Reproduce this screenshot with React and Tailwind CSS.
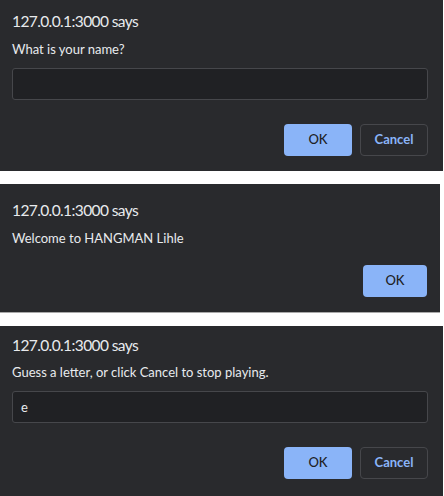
import React from "react";

const font = { fontFamily: 'Lato, "Noto Sans", sans-serif' };

function Title() {
  return (
    <div className="text-[15.5px] leading-[20px] tracking-[-0.6px] text-[#e8eaed]">127.0.0.1:3000 says</div>
  );
}

function Message({ children, className = "" }) {
  return (
    <div className={"text-[13px] leading-[16px] text-[#e8eaed] " + className}>{children}</div>
  );
}

function Input({ value, className = "" }) {
  return (
    <div
      className={
        "h-[32px] w-[416px] rounded-[3px] border border-[#46474b] bg-[#202124] px-[8px] text-[13px] leading-[30px] text-[#e8eaed] " +
        className
      }
    >
      {value}
    </div>
  );
}

function OkButton({ w = "w-[68px]" }) {
  return (
    <button
      className={
        "h-[32px] " +
        w +
        " rounded-[4px] bg-[#8ab4f8] text-[13px] font-medium text-[#202124]"
      }
    >
      OK
    </button>
  );
}

function CancelButton() {
  return (
    <button className="h-[32px] w-[68px] rounded-[4px] border border-[#46474b] bg-transparent text-[13px] font-bold text-[#8ab4f8]">
      Cancel
    </button>
  );
}

export default function App() {
  return (
    <div className="flex h-[496px] w-[444px] flex-col bg-white" style={font}>
      <div className="flex h-[171px] w-[443px] shrink-0 flex-col bg-[#292a2d] px-[12px] pt-[11px]">
        <Title />
        <Message className="mt-[10px]">What is your name?</Message>
        <Input className="mt-[11px]" />
        <div className="mt-[24px] flex w-[416px] justify-end gap-[8px]">
          <OkButton />
          <CancelButton />
        </div>
      </div>

      <div className="mt-[13px] flex h-[129px] w-[440px] shrink-0 flex-col border-b border-[#a9a9a9] bg-[#292a2d] px-[12px] pt-[16px]">
        <Title />
        <Message className="mt-[10px]">Welcome to HANGMAN Lihle</Message>
        <div className="mt-[19px] flex justify-end pr-[1px]">
          <OkButton w="w-[64px]" />
        </div>
      </div>

      <div className="mt-[13px] flex h-[170px] w-[443px] shrink-0 flex-col bg-[#292a2d] px-[12px] pt-[9px]">
        <Title />
        <Message className="mt-[9px]">Guess a letter, or click Cancel to stop playing.</Message>
        <Input value="e" className="mt-[11px]" />
        <div className="mt-[24px] flex w-[416px] justify-end gap-[8px]">
          <OkButton />
          <CancelButton />
        </div>
      </div>
    </div>
  );
}
